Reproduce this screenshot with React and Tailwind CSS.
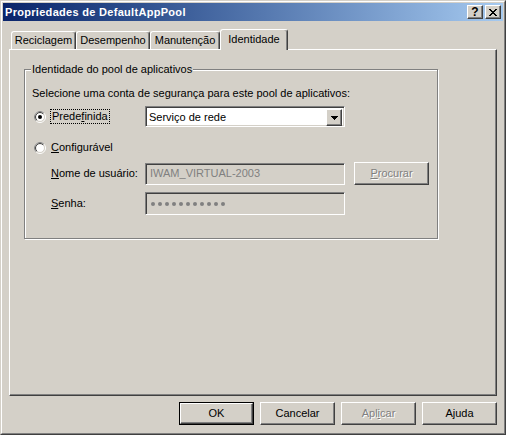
import React from 'react'

// classic Windows 2000 dialog pieces

const raised =
  'border border-t-white border-l-white border-r-[#404040] border-b-[#404040] shadow-[inset_-1px_-1px_0_#808080] bg-[#d4d0c8]'
const sunken =
  'border border-t-[#808080] border-l-[#808080] border-r-white border-b-white shadow-[inset_1px_1px_0_#404040,inset_-1px_-1px_0_#d4d0c8]'
const disabledText = 'text-[#808080] [text-shadow:1px_1px_0_#fff]'

function Radio({ checked }) {
  const arc = (r) => {
    const d = r / Math.SQRT2
    return `M ${6 - d} ${6 + d} A ${r} ${r} 0 0 1 ${6 + d} ${6 - d}`
  }
  return (
    <svg width="12" height="12" viewBox="0 0 12 12" className="shrink-0">
      <circle cx="6" cy="6" r="5.5" fill="none" stroke="#ffffff" />
      <path d={arc(5.5)} fill="none" stroke="#808080" />
      <circle cx="6" cy="6" r="4.5" fill="#ffffff" stroke="#d4d0c8" />
      <path d={arc(4.5)} fill="none" stroke="#404040" />
      {checked && <circle cx="6" cy="6" r="2" fill="#000000" />}
    </svg>
  )
}

function Button({ children, isDefault, disabled }) {
  const face = (
    <div className={`flex-1 flex items-center justify-center ${raised} ${disabled ? disabledText : 'text-black'}`}>
      {children}
    </div>
  )
  if (isDefault) {
    return <div className="w-[75px] h-[23px] flex border border-black">{face}</div>
  }
  return <div className="w-[75px] h-[23px] flex">{face}</div>
}

function Tab({ label, width, selected }) {
  return (
    <div
      style={{ width }}
      className={`flex justify-center border-t border-l border-r border-t-white border-l-white border-r-[#404040] shadow-[inset_-1px_0_0_#808080] rounded-t-[3px] bg-[#d4d0c8] ${
        selected ? 'relative z-10 h-[21px] -mb-px pt-[3px]' : 'h-[18px] pt-[2px]'
      }`}
    >
      <span className="leading-[13px]">{label}</span>
    </div>
  )
}

function CloseGlyph() {
  return (
    <svg width="8" height="7" viewBox="0 0 8 7" shapeRendering="crispEdges">
      <rect x="0" y="0" width="2" height="1" />
      <rect x="6" y="0" width="2" height="1" />
      <rect x="1" y="1" width="2" height="1" />
      <rect x="5" y="1" width="2" height="1" />
      <rect x="2" y="2" width="4" height="1" />
      <rect x="3" y="3" width="2" height="1" />
      <rect x="2" y="4" width="4" height="1" />
      <rect x="1" y="5" width="2" height="1" />
      <rect x="5" y="5" width="2" height="1" />
      <rect x="0" y="6" width="2" height="1" />
      <rect x="6" y="6" width="2" height="1" />
    </svg>
  )
}

export default function App() {
  return (
    <div className="w-[506px] h-[435px] font-['Liberation_Sans','DejaVu_Sans',Arial,sans-serif] text-[11px] text-black bg-[#d4d0c8] border border-t-[#d4d0c8] border-l-[#d4d0c8] border-r-[#404040] border-b-[#404040]">
      <div className="h-full border border-t-white border-l-white border-r-[#808080] border-b-[#808080] p-px flex flex-col">
        {/* barra de título */}
        <div className="h-[18px] flex items-center bg-linear-to-r from-[#0a246a] to-[#a6caf0] pl-[2px] pr-[2px]">
          <span className="flex-1 font-bold text-white leading-[18px] tracking-[0.3px]">Propriedades de DefaultAppPool</span>
          <div className={`w-[16px] h-[14px] flex items-center justify-center ${raised}`}>
            <span className="font-bold text-[12px] leading-[12px]">?</span>
          </div>
          <div className={`ml-[2px] w-[16px] h-[14px] flex items-center justify-center ${raised}`}>
            <CloseGlyph />
          </div>
        </div>

        {/* abas */}
        <div className="px-[6px] mt-[8px] flex flex-col">
          <div className="h-[20px] flex items-end pl-[2px]">
            <Tab label="Reciclagem" width={65} />
            <Tab label="Desempenho" width={74} />
            <Tab label="Manutenção" width={70} />
            <Tab label="Identidade" width={68} selected />
          </div>

          <div className="h-[347px] border border-t-white border-l-white border-r-[#404040] border-b-[#404040] shadow-[inset_-1px_-1px_0_#808080]">
            {/* caixa de grupo */}
            <div className="relative ml-[14px] mt-[19px] w-[414px] h-[170px] border border-[#808080] shadow-[1px_1px_0_#fff,inset_1px_1px_0_#fff]">
              <span className="absolute left-[6px] top-[-7px] px-px bg-[#d4d0c8] leading-[13px]">
                Identidade do pool de aplicativos
              </span>

              <div className="mt-[17px] ml-[7px] leading-[13px]">
                Selecione uma conta de segurança para este pool de aplicativos:
              </div>

              <div className="mt-[6px] h-[21px] flex items-center">
                <div className="w-[120px] flex items-center pl-[9px]">
                  <Radio checked />
                  <span className="ml-[4px] h-[15px] flex items-center border border-dotted border-black px-px leading-[13px]">
                    Prede<u>f</u>inida
                  </span>
                </div>
                <div className={`w-[200px] h-[21px] flex bg-white ${sunken} p-[2px]`}>
                  <span className="flex-1 pl-[1px] leading-[17px]">Serviço de rede</span>
                  <div className={`w-[16px] h-[17px] flex items-center justify-center ${raised}`}>
                    <svg width="7" height="4" viewBox="0 0 7 4" shapeRendering="crispEdges">
                      <path d="M0 0H7V1H6V2H5V3H4V4H3V3H2V2H1V1H0Z" fill="#000" />
                    </svg>
                  </div>
                </div>
              </div>

              <div className="mt-[10px] h-[21px] flex items-center pl-[9px]">
                <Radio />
                <span className="ml-[5px] leading-[13px]">
                  <u>C</u>onfigurável
                </span>
              </div>

              <div className="mt-[4px] h-[23px] flex items-center">
                <div className="w-[120px] pl-[26px] leading-[13px]">
                  <u>N</u>ome de usuário:
                </div>
                <div className={`w-[200px] h-[22px] flex items-center pl-[4px] text-[#808080] ${sunken}`}>
                  IWAM_VIRTUAL-2003
                </div>
                <div className="ml-[9px]">
                  <Button disabled>
                    <span>
                      <u>P</u>rocurar
                    </span>
                  </Button>
                </div>
              </div>

              <div className="mt-[7px] h-[23px] flex items-center">
                <div className="w-[120px] pl-[26px] leading-[13px]">
                  <u>S</u>enha:
                </div>
                <div className={`w-[200px] h-[23px] flex items-center gap-[3px] pl-[5px] ${sunken}`}>
                  {Array.from({ length: 11 }).map((_, i) => (
                    <span key={i} className="w-[4px] h-[4px] rounded-full bg-[#808080]" />
                  ))}
                </div>
              </div>
            </div>
          </div>

          {/* botões */}
          <div className="mt-[6px] flex justify-end gap-[6px]">
            <Button isDefault>OK</Button>
            <Button>Cancelar</Button>
            <Button disabled>
              <span>
                Apl<u>i</u>car
              </span>
            </Button>
            <Button>Ajuda</Button>
          </div>
        </div>
      </div>
    </div>
  )
}
